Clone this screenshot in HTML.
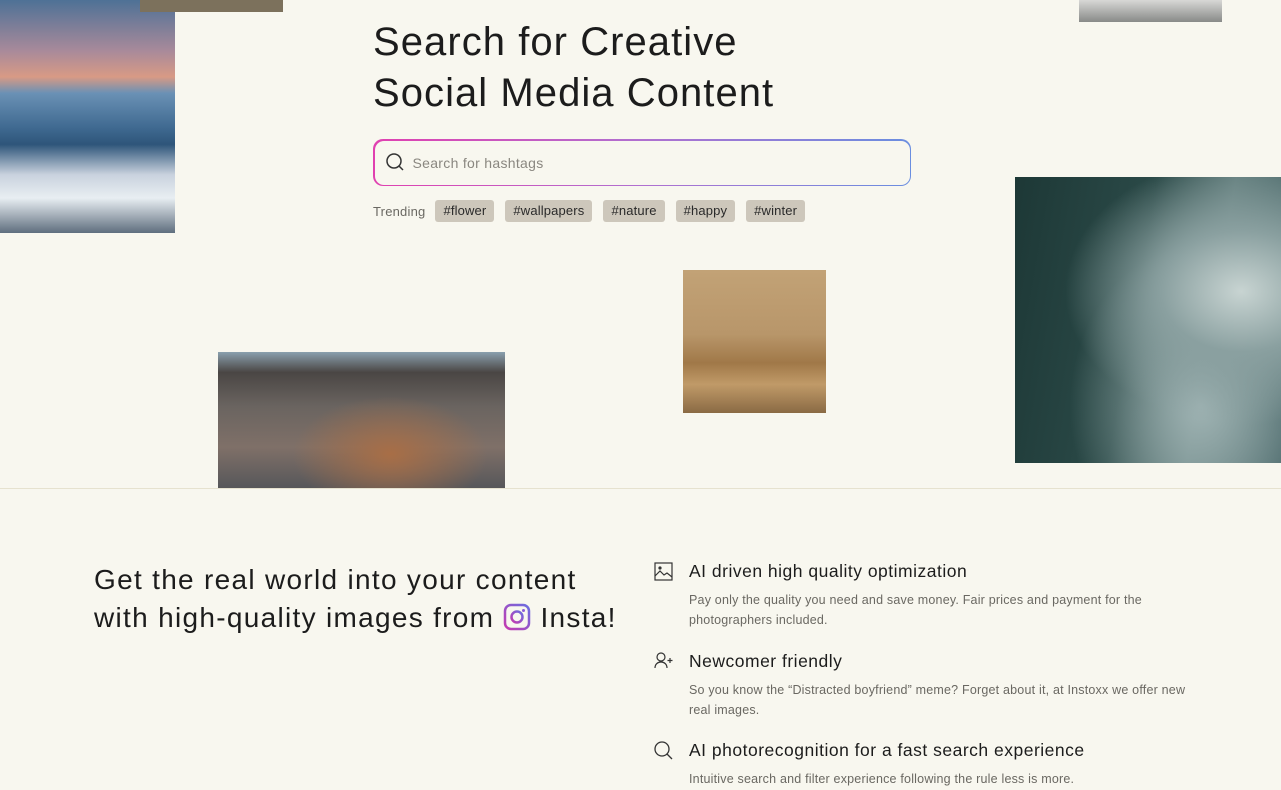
<!DOCTYPE html><html><head><style>
body{margin:0;width:1281px;height:790px;background:#f8f7ef;font-family:"Liberation Sans",sans-serif;color:#1c1c1c;position:relative;overflow:hidden}
.a{position:absolute}
h1{position:absolute;left:373px;top:17px;margin:0;font-weight:400;font-size:40px;line-height:51px;letter-spacing:1.05px}
.sb{position:absolute;left:373px;top:139px;width:538px;height:47px;border-radius:10px;background:linear-gradient(90deg,#e040b0,#b070d0,#6a8ee0);padding:0;box-sizing:border-box}
.sb div{position:absolute;inset:1.5px;border-radius:9px;background:#f8f7ef;color:#8a8780;font-size:14px;line-height:44px;padding-left:38px;letter-spacing:0.3px}
.tr{position:absolute;left:373px;top:200px;font-size:13px;color:#6a6862;display:flex;align-items:center;height:22px;letter-spacing:0.2px}
.tag{background:#cdc7bb;color:#2a2a2a;border-radius:3px;padding:0 8px;height:22px;line-height:22px;margin-left:11px;font-size:13px;letter-spacing:0.15px}
.h2{position:absolute;left:94px;top:561px;font-size:28px;line-height:38px;margin:0;letter-spacing:1.3px}
.f{position:absolute;left:689px}
.ft{font-size:17.5px;line-height:22px;letter-spacing:0.5px}
.fd{font-size:12.5px;color:#6a6862;line-height:20px;margin-top:8px;width:515px;letter-spacing:0.2px}
</style></head><body>
<div class="a" style="left:0;top:0;width:175px;height:233px;background:linear-gradient(180deg,#4e7196 0%,#a98a9a 22%,#d89a85 33%,#6a91b5 40%,#3f6990 55%,#2e557a 62%,#c9d2de 75%,#e8eef2 85%,#5f6e7e 100%)"></div>
<div class="a" style="left:140px;top:0;width:143px;height:12px;background:#7c715c"></div>
<div class="a" style="left:1079px;top:0;width:143px;height:22px;background:linear-gradient(180deg,#d8d8d6,#888a88)"></div>
<div class="a" style="left:1015px;top:177px;width:266px;height:286px;background:radial-gradient(ellipse at 85% 40%,#c8d4d2 0%,#8aa0a0 25%,transparent 55%),radial-gradient(ellipse at 70% 80%,#9fb3b3 0%,transparent 50%),linear-gradient(100deg,#1d3836 0%,#2b4a48 45%,#5f7b7a 70%,#3e5d5f 100%)"></div>
<div class="a" style="left:683px;top:270px;width:143px;height:143px;background:linear-gradient(180deg,#c2a276 0%,#b8966a 45%,#a07848 65%,#c09a68 80%,#8a6a44 100%)"></div>
<div class="a" style="left:218px;top:352px;width:287px;height:136px;background:radial-gradient(ellipse at 60% 75%,#a86e46 0%,transparent 40%),linear-gradient(180deg,#8aa0ae 0%,#4a4644 15%,#6a6460 40%,#7f7068 70%,#57575a 100%)"></div>
<div class="a" style="left:0;top:488px;width:1281px;height:1px;background:#e6e2cf"></div>
<h1>Search for Creative<br>Social Media Content</h1>
<div class="sb"><div>Search for hashtags</div></div>
<svg class="a" style="left:385px;top:152px" width="20" height="20" viewBox="0 0 20 20" fill="none" stroke="#333" stroke-width="1.5"><circle cx="9" cy="9" r="7"/><path d="M14 14l4 4"/></svg>
<div class="tr">Trending<span class="tag" style="margin-left:10px">#flower</span><span class="tag">#wallpapers</span><span class="tag">#nature</span><span class="tag">#happy</span><span class="tag">#winter</span></div>
<div class="h2">Get the real world into your content<br>with high-quality images from <svg width="28" height="28" viewBox="0 0 28 28" style="vertical-align:-4px"><defs><linearGradient id="g" x1="0" y1="1" x2="1" y2="0"><stop offset="0" stop-color="#c53ab0"/><stop offset="1" stop-color="#6a6ee0"/></linearGradient></defs><rect x="2" y="2" width="24" height="24" rx="6" fill="none" stroke="url(#g)" stroke-width="2.5"/><circle cx="14" cy="14" r="5.5" fill="none" stroke="url(#g)" stroke-width="2.5"/><circle cx="20.5" cy="7.5" r="1.5" fill="#8a5ad8"/></svg> Insta!</div>
<svg class="a" style="left:654px;top:562px" width="19" height="19" viewBox="0 0 19 19" fill="none" stroke="#333" stroke-width="1.2"><rect x="1" y="1" width="17" height="17"/><path d="M1 14l5-5 4 4 3-2 5 4"/><circle cx="6" cy="6" r="1" fill="#333"/></svg>
<div class="f" style="top:560px"><div class="ft">AI driven high quality optimization</div><div class="fd">Pay only the quality you need and save money. Fair prices and payment for the photographers included.</div></div>
<svg class="a" style="left:654px;top:652px" width="21" height="17" viewBox="0 0 21 17" fill="none" stroke="#333" stroke-width="1.2"><circle cx="7" cy="5" r="4"/><path d="M1 16c0-4 3-6 6-6s6 2 6 6M16 6v5M13.5 8.5h5"/></svg>
<div class="f" style="top:650px"><div class="ft">Newcomer friendly</div><div class="fd">So you know the “Distracted boyfriend” meme? Forget about it, at Instoxx we offer new<br>real images.</div></div>
<svg class="a" style="left:654px;top:741px" width="19" height="19" viewBox="0 0 19 19" fill="none" stroke="#333" stroke-width="1.3"><circle cx="8" cy="8" r="7"/><path d="M13 13l5 5"/></svg>
<div class="f" style="top:739px"><div class="ft">AI photorecognition for a fast search experience</div><div class="fd">Intuitive search and filter experience following the rule less is more.</div></div>
</body></html>
